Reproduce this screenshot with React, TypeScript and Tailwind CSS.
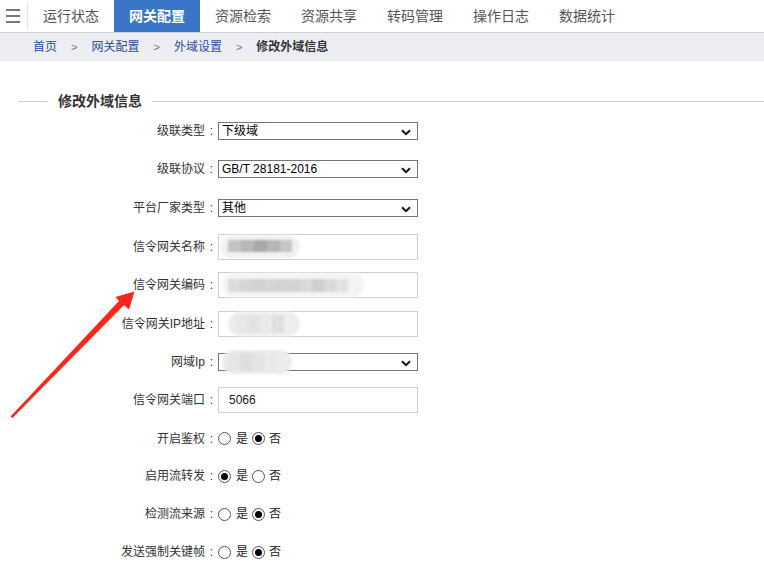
import React from 'react';

const tabs = ['运行状态', '网关配置', '资源检索', '资源共享', '转码管理', '操作日志', '数据统计'];

const font = 'font-["Liberation_Sans","Noto_Sans_CJK_SC",sans-serif]';

function Chevron() {
  return (
    <svg className="pointer-events-none absolute right-[6px] top-[6px]" width="10" height="7" viewBox="0 0 10 7">
      <path d="M1 1.2 L5 5.2 L9 1.2" fill="none" stroke="#111" strokeWidth="2" />
    </svg>
  );
}

function Row({ label, h, children }: { label: string; h: string; children: React.ReactNode }) {
  return (
    <div className={`flex items-center ${h}`}>
      <div className="flex w-[218px] shrink-0 justify-end text-[12px] text-[#333]">
        <span>{label}</span>
        <span className="w-[13px] text-center">:</span>
      </div>
      {children}
    </div>
  );
}

function SelectBox({ value, children }: { value: string; children?: React.ReactNode }) {
  return (
    <div className="relative flex h-[18px] w-[200px] items-center border border-[#767676] bg-white pl-[3px] text-[12px] leading-none text-black">
      <span>{value}</span>
      {children}
      <Chevron />
    </div>
  );
}

function TextBox({ value, children }: { value?: string; children?: React.ReactNode }) {
  return (
    <div className="relative h-[26px] w-[200px]">
      <input
        defaultValue={value}
        className="h-full w-full border border-[#cfcfcf] bg-white px-[10px] text-[12px] text-[#222] outline-none"
      />
      {children}
    </div>
  );
}

function Radio({ checked }: { checked: boolean }) {
  return (
    <span className="flex h-[13px] w-[13px] items-center justify-center rounded-full border border-[#555] bg-white">
      {checked && <span className="h-[7px] w-[7px] rounded-full bg-black" />}
    </span>
  );
}

function YesNo({ yes }: { yes: boolean }) {
  return (
    <div className="flex items-center text-[12px] text-[#222]">
      <Radio checked={yes} />
      <span className="ml-[5px] mr-[4px]">是</span>
      <Radio checked={!yes} />
      <span className="ml-[4px]">否</span>
    </div>
  );
}

export default function App() {
  return (
    <div className={`relative h-[567px] w-[764px] overflow-hidden bg-white ${font}`}>
      {/* Top nav */}
      <div className="flex h-[33px] border-b border-[#d0d0d0] bg-white">
        <div className="flex w-[27px] flex-col items-start justify-center gap-[4px] pl-[6px]">
          <span className="h-[2px] w-[14px] bg-[#777]" />
          <span className="h-[2px] w-[14px] bg-[#777]" />
          <span className="h-[2px] w-[14px] bg-[#777]" />
        </div>
        <div className="my-[3px] w-px bg-[#e2e2e2]" />
        {tabs.map((t, i) => (
          <div
            key={t}
            className={
              i === 1
                ? 'flex w-[86px] items-center justify-center bg-[#3a76c8] text-[14px] font-bold text-white'
                : 'flex w-[86px] items-center justify-center text-[14px] text-[#555]'
            }
          >
            {t}
          </div>
        ))}
      </div>

      {/* Breadcrumb */}
      <div className="flex h-[28px] items-center bg-[#eceef3] pl-[33px] text-[12px]">
        <span className="text-[#2c4c9c]">首页</span>
        <span className="mx-[14px] text-[11px] text-[#777]">&gt;</span>
        <span className="text-[#2c4c9c]">网关配置</span>
        <span className="mx-[14px] text-[11px] text-[#777]">&gt;</span>
        <span className="text-[#2c4c9c]">外域设置</span>
        <span className="mx-[14px] text-[11px] text-[#777]">&gt;</span>
        <span className="font-bold text-[#333]">修改外域信息</span>
      </div>

      {/* Legend */}
      <div className="mt-[30px] flex h-[20px] items-center">
        <span className="ml-[18px] h-px w-[30px] bg-[#cccccc]" />
        <span className="mx-[10px] text-[14px] font-bold text-[#333]">修改外域信息</span>
        <span className="h-px flex-1 bg-[#cccccc]" />
      </div>

      {/* Form */}
      <div className="mt-[1px] flex flex-col">
        <Row label="级联类型" h="h-[38px]">
          <SelectBox value="下级域" />
        </Row>
        <Row label="级联协议" h="h-[38px]">
          <SelectBox value="GB/T 28181-2016" />
        </Row>
        <Row label="平台厂家类型" h="h-[39px]">
          <SelectBox value="其他" />
        </Row>
        <Row label="信令网关名称" h="h-[39px]">
          <TextBox>
            <div className="pointer-events-none absolute left-[2px] top-[1px] flex h-[23px] w-[80px] items-center rounded-full bg-[#f1f1f1] pl-[8px] blur-[1px]">
              <div className="flex h-[12px]">
                <span className="w-[13px] bg-[#c4c4c4]" />
                <span className="w-[13px] bg-[#b8b8b8]" />
                <span className="w-[13px] bg-[#a9a9a9]" />
                <span className="w-[13px] bg-[#b6b6b6]" />
                <span className="w-[12px] bg-[#c6c6c6]" />
              </div>
            </div>
          </TextBox>
        </Row>
        <Row label="信令网关编码" h="h-[38px]">
          <TextBox>
            <div className="pointer-events-none absolute left-[4px] top-[1px] flex h-[24px] w-[142px] items-center rounded-full bg-[#f4f4f4] pl-[6px] blur-[1px]">
              <div className="flex h-[13px]">
                <span className="w-[12px] bg-[#dcdcdc]" />
                <span className="w-[12px] bg-[#d6d6d6]" />
                <span className="w-[12px] bg-[#d0d2d4]" />
                <span className="w-[12px] bg-[#d8d5d2]" />
                <span className="w-[12px] bg-[#d2d3d5]" />
                <span className="w-[12px] bg-[#d6d3d0]" />
                <span className="w-[12px] bg-[#d9dadc]" />
                <span className="w-[12px] bg-[#cfcfcf]" />
                <span className="w-[12px] bg-[#d8dadc]" />
                <span className="w-[12px] bg-[#e2e2e2]" />
              </div>
            </div>
          </TextBox>
        </Row>
        <Row label="信令网关IP地址" h="h-[39px]">
          <TextBox>
            <div className="pointer-events-none absolute left-[10px] top-[1px] flex h-[24px] w-[72px] items-center rounded-full bg-[#eeeeee] pl-[8px] blur-[1px]">
              <div className="flex h-[18px]">
                <span className="w-[12px] bg-[#e8e8e8]" />
                <span className="w-[12px] bg-[#e3e3e3]" />
                <span className="w-[12px] bg-[#ebebeb]" />
                <span className="w-[12px] bg-[#e0e0e0]" />
              </div>
            </div>
          </TextBox>
        </Row>
        <Row label="网域Ip" h="h-[37px]">
          <SelectBox value="">
            <div className="pointer-events-none absolute left-[3px] top-[-4px] flex h-[24px] w-[70px] items-center rounded-full bg-[#ececec] pl-[6px] blur-[1px]">
              <div className="flex h-[18px]">
                <span className="w-[12px] bg-[#e6e6e6]" />
                <span className="w-[12px] bg-[#dedede]" />
                <span className="w-[12px] bg-[#e4e4e4]" />
                <span className="w-[12px] bg-[#e9e9e9]" />
              </div>
            </div>
          </SelectBox>
        </Row>
        <Row label="信令网关端口" h="h-[40px]">
          <TextBox value="5066" />
        </Row>
        <Row label="开启鉴权" h="h-[37px]">
          <YesNo yes={false} />
        </Row>
        <Row label="启用流转发" h="h-[38px]">
          <YesNo yes={true} />
        </Row>
        <Row label="检测流来源" h="h-[38px]">
          <YesNo yes={false} />
        </Row>
        <Row label="发送强制关键帧" h="h-[38px]">
          <YesNo yes={false} />
        </Row>
      </div>

      {/* Annotation arrow */}
      <svg className="pointer-events-none absolute left-0 top-0" width="764" height="567" viewBox="0 0 764 567">
        <polygon points="10.5,416.5 119,301 115.5,297 134.5,291.5 129,309.5 124,305 12.5,418" fill="#ff2618" />
      </svg>
    </div>
  );
}
